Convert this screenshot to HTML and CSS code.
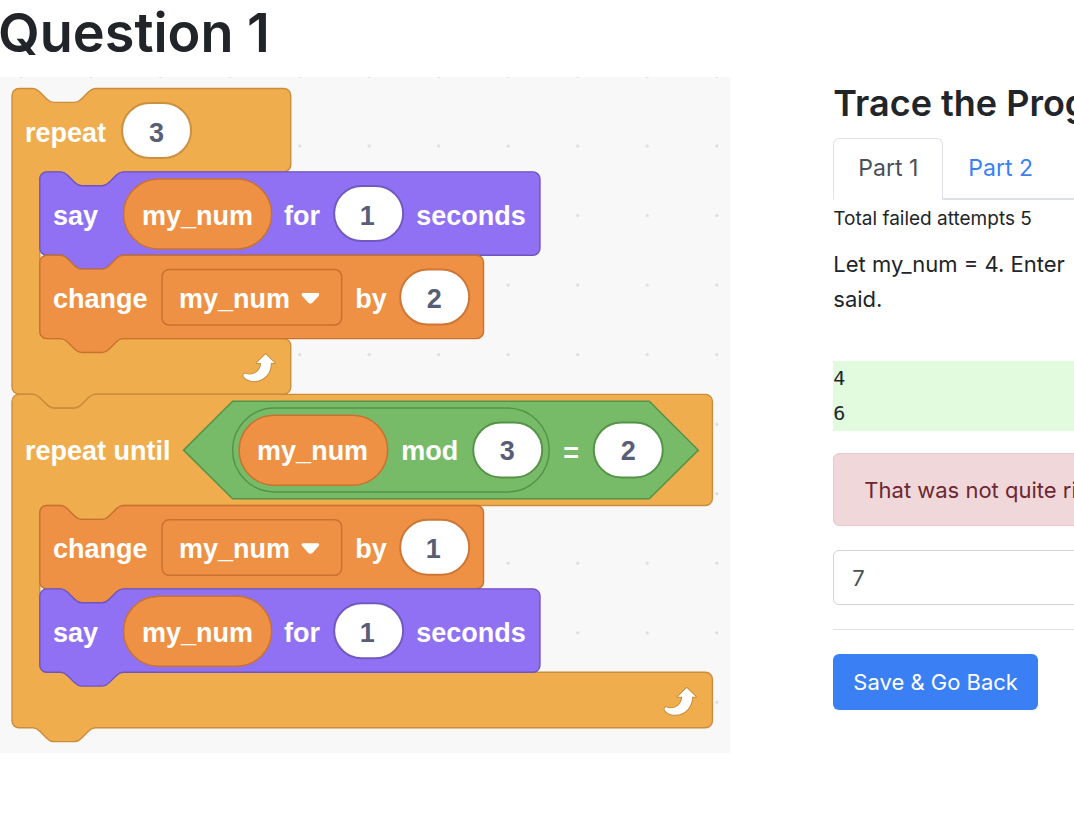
FILE: index.html
```html
<!DOCTYPE html>
<html lang="en">
<head>
<meta charset="utf-8">
<meta name="viewport" content="width=device-width, initial-scale=1">
<title>Question 1</title>
<link rel="stylesheet" href="styles.css">
</head>
<body>
<h1 class="page-title">Question 1</h1>
<main class="question">
  <figure class="program">
    <svg class="program-svg" viewBox="0 77 730 676" role="img" aria-label="Block program">
      <defs>
        <pattern id="dots" x="265" y="111.5" width="69.5" height="69.5" patternUnits="userSpaceOnUse">
          <circle class="dot" cx="34.5" cy="34.5" r="1.5"/>
        </pattern>
        <path id="say" d="M0,4 A4,4 0 0 1 4,0 H12 c2,0 3,1 4,2 l4,4 c1,1 2,2 4,2 h12 c2,0 3,-1 4,-2 l4,-4 c1,-1 2,-2 4,-2 H284 a4,4 0 0 1 4,4 v40 a4,4 0 0 1 -4,4 H48 c-2,0 -3,1 -4,2 l-4,4 c-1,1 -2,2 -4,2 h-12 c-2,0 -3,-1 -4,-2 l-4,-4 c-1,-1 -2,-2 -4,-2 H4 a4,4 0 0 1 -4,-4 z"/>
        <path id="change" d="M0,4 A4,4 0 0 1 4,0 H12 c2,0 3,1 4,2 l4,4 c1,1 2,2 4,2 h12 c2,0 3,-1 4,-2 l4,-4 c1,-1 2,-2 4,-2 H251.5 a4,4 0 0 1 4,4 v40 a4,4 0 0 1 -4,4 H48 c-2,0 -3,1 -4,2 l-4,4 c-1,1 -2,2 -4,2 h-12 c-2,0 -3,-1 -4,-2 l-4,-4 c-1,-1 -2,-2 -4,-2 H4 a4,4 0 0 1 -4,-4 z"/>
        <path id="loop" d="M265.500 354.200 L274.500 363 H270.800 C271 373 264 381 254 381 C249 381 245 378.800 243.400 376.200 C242.800 373.800 244.500 373 246 374 C253 376 260.500 371.500 261 363 H256.500 Z"/>
        <path id="caret" d="M303 293 H317.500 Q320 293.500 318.500 295.800 L312.500 302.500 Q310.300 304.800 308 302.500 L302 295.800 Q300.500 293.500 303 293 Z"/>
      </defs>
      <rect class="canvas" y="77" width="730" height="676"/>
      <rect y="77" width="730" height="676" fill="url(#dots)"/>

      <g transform="translate(12 88.500) scale(1.736)">
        <path class="control" d="M0,4 A4,4 0 0 1 4,0 H12 c2,0 3,1 4,2 l4,4 c1,1 2,2 4,2 h12 c2,0 3,-1 4,-2 l4,-4 c1,-1 2,-2 4,-2 H156.500 a4,4 0 0 1 4,4 v40 a4,4 0 0 1 -4,4 H64 c-2,0 -3,1 -4,2 l-4,4 c-1,1 -2,2 -4,2 h-12 c-2,0 -3,-1 -4,-2 l-4,-4 c-1,-1 -2,-2 -4,-2 h-8 a4,4 0 0 0 -4,4 v88 a4,4 0 0 0 4,4 H156.500 a4,4 0 0 1 4,4 v24 a4,4 0 0 1 -4,4 H48 c-2,0 -3,1 -4,2 l-4,4 c-1,1 -2,2 -4,2 h-12 c-2,0 -3,-1 -4,-2 l-4,-4 c-1,-1 -2,-2 -4,-2 H4 a4,4 0 0 1 -4,-4 z"/>
        <use class="looks" href="#say" x="16" y="48"/>
        <use class="data" href="#change" x="16" y="96"/>
      </g>
      <g transform="translate(12 394.200) scale(1.736)">
        <path class="control" d="M0,4 A4,4 0 0 1 4,0 H12 c2,0 3,1 4,2 l4,4 c1,1 2,2 4,2 h12 c2,0 3,-1 4,-2 l4,-4 c1,-1 2,-2 4,-2 H399.300 a4,4 0 0 1 4,4 v56 a4,4 0 0 1 -4,4 H64 c-2,0 -3,1 -4,2 l-4,4 c-1,1 -2,2 -4,2 h-12 c-2,0 -3,-1 -4,-2 l-4,-4 c-1,-1 -2,-2 -4,-2 h-8 a4,4 0 0 0 -4,4 v88 a4,4 0 0 0 4,4 H399.300 a4,4 0 0 1 4,4 v24 a4,4 0 0 1 -4,4 H48 c-2,0 -3,1 -4,2 l-4,4 c-1,1 -2,2 -4,2 h-12 c-2,0 -3,-1 -4,-2 l-4,-4 c-1,-1 -2,-2 -4,-2 H4 a4,4 0 0 1 -4,-4 z"/>
        <use class="data" href="#change" x="16" y="64"/>
        <use class="looks" href="#say" x="16" y="112"/>
      </g>

      <rect class="slot in-control" x="122" y="103" width="69" height="55" rx="27.500"/>
      <text class="word" x="25" y="142">repeat</text>
      <text class="value" x="156.500" y="142">3</text>

      <rect class="data" x="123.500" y="179" width="148" height="70" rx="35"/>
      <rect class="slot in-looks" x="334" y="186" width="69" height="55" rx="27.500"/>
      <text class="word" x="53" y="225">say</text>
      <text class="word" x="142" y="225">my_num</text>
      <text class="word" x="284" y="225">for</text>
      <text class="value" x="367" y="225">1</text>
      <text class="word" x="416" y="225">seconds</text>

      <rect class="data" x="162" y="269.500" width="179.500" height="55.500" rx="7"/>
      <use class="glyph" href="#caret"/>
      <rect class="slot in-data" x="400" y="269.500" width="69" height="55" rx="27.500"/>
      <text class="word" x="53" y="308">change</text>
      <text class="word" x="179" y="308">my_num</text>
      <text class="word" x="355" y="308">by</text>
      <text class="value" x="434" y="308">2</text>
      <use class="glyph loop" href="#loop"/>

      <path class="operator" d="M183.500 450 L232.500 401 H649 L698 450 L649 498.500 H232.500 Z"/>
      <rect class="operator" x="232.500" y="407.800" width="316.500" height="84" rx="42"/>
      <rect class="data" x="239" y="415" width="148.500" height="70" rx="35"/>
      <rect class="slot in-operator" x="473" y="422.300" width="69" height="55" rx="27.500"/>
      <rect class="slot in-operator" x="593.500" y="422.300" width="69" height="55" rx="27.500"/>
      <text class="word" x="25" y="460">repeat until</text>
      <text class="word" x="257" y="460">my_num</text>
      <text class="word" x="401" y="460">mod</text>
      <text class="value" x="507" y="460">3</text>
      <text class="word" x="563" y="462">=</text>
      <text class="value" x="628" y="460">2</text>

      <rect class="data" x="162" y="519.500" width="179.500" height="55.500" rx="7"/>
      <use class="glyph" href="#caret" y="250"/>
      <rect class="slot in-data" x="400" y="519.500" width="69" height="55" rx="27.500"/>
      <text class="word" x="53" y="558">change</text>
      <text class="word" x="179" y="558">my_num</text>
      <text class="word" x="355" y="558">by</text>
      <text class="value" x="433" y="558">1</text>

      <rect class="data" x="123.500" y="596" width="148" height="70" rx="35"/>
      <rect class="slot in-looks" x="334" y="603" width="69" height="55" rx="27.500"/>
      <text class="word" x="53" y="642">say</text>
      <text class="word" x="142" y="642">my_num</text>
      <text class="word" x="284" y="642">for</text>
      <text class="value" x="367" y="642">1</text>
      <text class="word" x="416" y="642">seconds</text>
      <use class="glyph loop" href="#loop" x="421" y="333.500"/>
    </svg>
  </figure>

  <section class="panel">
    <h2 class="panel-title">Trace the Program</h2>
    <nav class="tabs">
      <a class="tab active" href="#part1">Part 1</a>
      <a class="tab" href="#part2">Part 2</a>
    </nav>
    <p class="attempts">Total failed attempts 5</p>
    <label class="prompt" for="answer">Let my_num = 4. Enter<br>said.</label>
    <pre class="answers">4
6</pre>
    <div class="alert" role="alert">That was not quite right</div>
    <input class="answer" id="answer" type="text" value="7">
    <hr class="rule">
    <button class="save" type="button">Save &amp; Go Back</button>
  </section>
</main>
</body>
</html>
```
FILE: styles.css
```css
* { box-sizing: border-box; }

body {
  margin: 0;
  overflow-x: hidden;
  background: #fff;
  color: #212529;
  font-family: Inter, "Liberation Sans", sans-serif;
  font-size: 22px;
  line-height: 35px;
}

.page-title {
  margin: 0 0 11px -2px;
  font-size: 54px;
  font-weight: 600;
  line-height: 66px;
}

.question {
  display: flex;
  align-items: flex-start;
  gap: 103px;
  overflow: hidden;
}

.program { flex: 0 0 68%; margin: 0; }
.program-svg { display: block; width: 100%; height: auto; }

.canvas { fill: #f8f8f8; }
.dot { fill: #dadada; }
.control { fill: #f0ad4e; stroke: #c98d3c; }
.looks { fill: #9071f4; stroke: #6f55bd; }
.data { fill: #ee9144; stroke: #c9722f; }
.operator { fill: #77bb69; stroke: #559448; }
.slot { fill: #fff; stroke-width: 2; }
.in-control { stroke: #cb9040; }
.in-looks { stroke: #7259c2; }
.in-data { stroke: #cd7636; }
.in-operator { stroke: #559448; }
path.control, use.looks, use.data { stroke-width: 0.8; }
rect.data, .operator { stroke-width: 1.5; }
.glyph { fill: #fff; }
.loop { stroke: #c98d3c; stroke-width: 2; stroke-linejoin: round; paint-order: stroke; }

.word, .value {
  font-family: "Liberation Sans", Arial, sans-serif;
  font-size: 27px;
  font-weight: 700;
  fill: #fff;
}
.value { fill: #575e75; text-anchor: middle; }

.panel {
  display: flex;
  flex: 0 0 40%;
  flex-direction: column;
  padding-top: 2px;
}

.panel-title {
  margin: 0 0 11px;
  font-size: 36px;
  font-weight: 600;
  line-height: 48px;
  white-space: nowrap;
}

.tabs {
  display: flex;
  border-bottom: 2px solid #dee2e6;
}
.tab {
  margin-bottom: -2px;
  padding: 12px 24px 13px;
  border: 1px solid transparent;
  border-radius: 6px 6px 0 0;
  color: #3a80f4;
  font-size: 23px;
  text-decoration: none;
}
.tab.active {
  border-color: #dee2e6 #dee2e6 #fff;
  background: #fff;
  color: #495057;
}

.attempts {
  margin: 0 0 9px;
  font-size: 19px;
  line-height: 38px;
}

.prompt { margin-bottom: 44px; white-space: nowrap; }

.answers {
  margin: 0 0 22px;
  background: #e2fadd;
  font-family: "DejaVu Sans Mono", monospace;
  font-size: 20px;
  line-height: 35px;
}

.alert {
  margin-bottom: 24px;
  padding: 19px 30px 17px;
  border: 1px solid #eec6cb;
  border-radius: 6px;
  background: #f0d7d9;
  color: #6c2730;
  white-space: nowrap;
}

.answer {
  height: 55px;
  padding: 0 18px;
  border: 1px solid #ced4da;
  border-radius: 6px;
  background: #fff;
  color: #495057;
  font: inherit;
}

.rule {
  width: 100%;
  margin: 24px 0;
  border: 0;
  border-top: 1px solid #dfe0e1;
}

.save {
  align-self: flex-start;
  height: 56px;
  padding: 0 20px;
  border: 0;
  border-radius: 6px;
  background: #3a80f4;
  color: #fff;
  font: inherit;
}
```
